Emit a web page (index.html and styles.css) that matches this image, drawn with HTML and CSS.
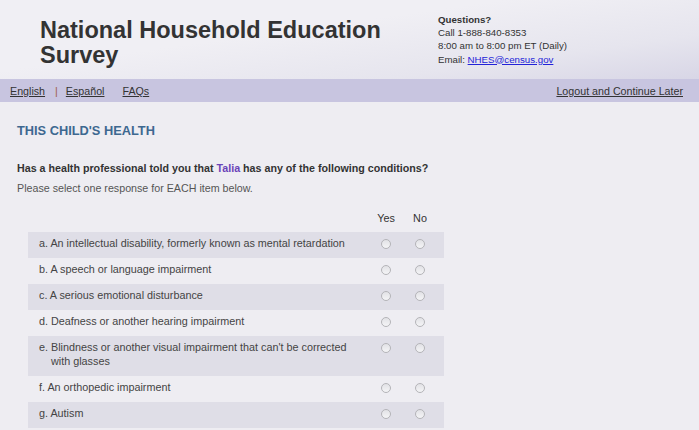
FILE: index.html
```html
<!DOCTYPE html>
<html lang="en">
<head>
<meta charset="utf-8">
<title>National Household Education Survey</title>
<link rel="stylesheet" href="styles.css">
</head>
<body>
<header class="site-header">
  <h1 class="site-title">National Household Education Survey</h1>
  <div class="contact">
    <div class="contact-q">Questions?</div>
    <div>Call 1-888-840-8353</div>
    <div>8:00 am to 8:00 pm ET (Daily)</div>
    <div>Email: <a class="mail" href="#">NHES@census.gov</a></div>
  </div>
</header>
<nav class="navbar">
  <div class="nav-left">
    <a href="#" class="nav-link">English</a>
    <span class="sep">|</span>
    <a href="#" class="nav-link">Español</a>
    <a href="#" class="nav-link faq">FAQs</a>
  </div>
  <a href="#" class="nav-link">Logout and Continue Later</a>
</nav>
<main class="content">
  <h2 class="section-title">THIS CHILD'S HEALTH</h2>
  <p class="question">Has a health professional told you that <span class="name">Talia</span> has any of the following conditions?</p>
  <p class="instr">Please select one response for EACH item below.</p>
  <div class="grid">
    <div class="head-row">
      <span></span>
      <span class="col-head">Yes</span>
      <span class="col-head">No</span>
    </div>
    <div class="row shade"><div class="label">a. An intellectual disability, formerly known as mental retardation</div><span class="radio"></span><span class="radio"></span></div>
    <div class="row"><div class="label">b. A speech or language impairment</div><span class="radio"></span><span class="radio"></span></div>
    <div class="row shade"><div class="label">c. A serious emotional disturbance</div><span class="radio"></span><span class="radio"></span></div>
    <div class="row"><div class="label">d. Deafness or another hearing impairment</div><span class="radio"></span><span class="radio"></span></div>
    <div class="row shade"><div class="label">e. Blindness or another visual impairment that can't be corrected with glasses</div><span class="radio"></span><span class="radio"></span></div>
    <div class="row"><div class="label">f. An orthopedic impairment</div><span class="radio"></span><span class="radio"></span></div>
    <div class="row shade"><div class="label">g. Autism</div><span class="radio"></span><span class="radio"></span></div>
  </div>
</main>
</body>
</html>
```

FILE: styles.css
```css
html, body {
  margin: 0;
  padding: 0;
}
body {
  background: #eeedf2;
  font-family: "Liberation Sans", Arial, sans-serif;
  color: #333;
}
.site-header {
  height: 79px;
  display: flex;
  align-items: flex-start;
  padding-left: 40px;
  box-sizing: border-box;
  background: linear-gradient(172deg, #f0eff4 40%, #e6e5ee 75%, #d8d6e6 100%);
}
.site-title {
  flex: 0 0 398px;
  margin: 18px 0 0;
  font-size: 23.5px;
  line-height: 25px;
  font-weight: bold;
  color: #333;
}
.contact {
  margin-top: 13px;
  font-size: 9.7px;
  line-height: 13.2px;
  color: #333;
}
.contact-q {
  font-weight: bold;
}
.mail {
  color: #2323d8;
  text-decoration: underline;
}
.navbar {
  height: 23px;
  box-sizing: border-box;
  padding: 2px 16px 0 10px;
  background: #c8c5e0;
  display: flex;
  justify-content: space-between;
  font-size: 10.7px;
  line-height: 21px;
}
.nav-left {
  display: flex;
}
.nav-link {
  color: #333;
  text-decoration: underline;
}
.sep {
  color: #a0604a;
  margin: 0 8px 0 10px;
}
.faq {
  margin-left: 18px;
}
.content {
  padding: 21px 0 0 17px;
}
.section-title {
  margin: 0;
  font-size: 12.8px;
  line-height: 16px;
  font-weight: bold;
  color: #3d6890;
}
.question {
  margin: 22px 0 0;
  font-size: 10.7px;
  line-height: 14px;
  font-weight: bold;
  color: #333;
}
.name {
  color: #6a44b8;
}
.instr {
  margin: 6px 0 0;
  font-size: 10.7px;
  line-height: 14px;
  color: #555;
}
.grid {
  margin: 16px 0 0 11px;
  width: 416px;
  font-size: 10.8px;
  line-height: 14px;
  color: #444;
}
.head-row,
.row {
  display: grid;
  grid-template-columns: 1fr 34px 34px;
  padding-right: 7px;
}
.head-row {
  margin-bottom: 7px;
}
.col-head {
  text-align: center;
  color: #333;
}
.row {
  padding-top: 4px;
  padding-bottom: 8px;
}
.shade {
  background: #dfdee7;
}
.label {
  padding: 0 15px 0 23px;
  text-indent: -12px;
}
.radio {
  justify-self: center;
  width: 10px;
  height: 10px;
  margin-top: 3px;
  border-radius: 50%;
  box-sizing: border-box;
  border: 1px solid #b4b4b8;
  background: linear-gradient(#e2e2e6, #f4f4f6);
}
```
